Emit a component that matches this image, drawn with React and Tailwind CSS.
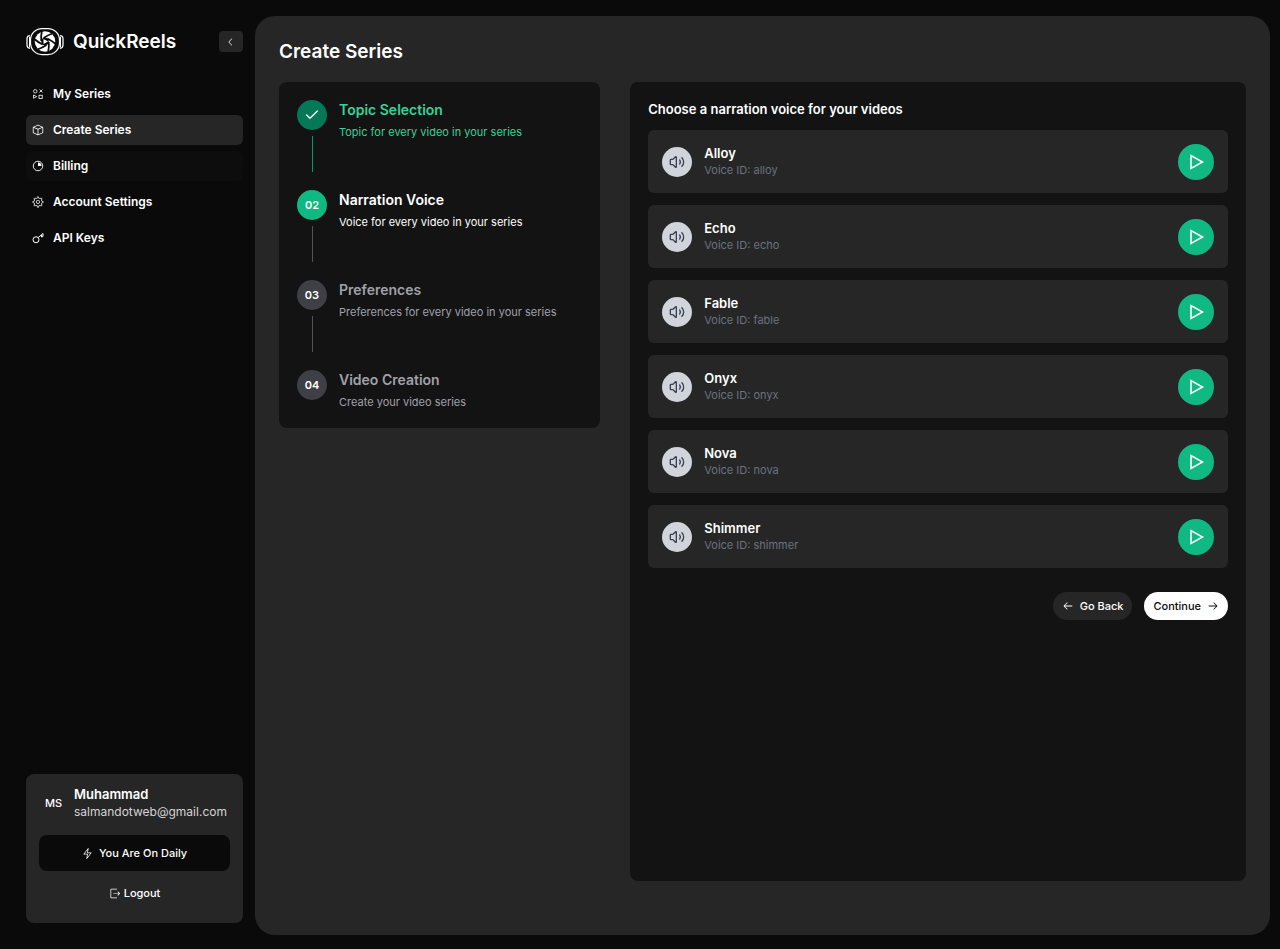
import { Check, Volume2 } from 'lucide-react';
import { RxCube, RxGear, RxLightningBolt, RxExit, RxChevronLeft, RxArrowLeft, RxArrowRight } from 'react-icons/rx';

function Logo() {
    return (<svg viewBox="0 0 76 58" className="h-[29px] w-[38px] shrink-0 text-white" fill="none" stroke="currentColor" aria-hidden="true">
      <rect x="9" y="3" width="58" height="52" rx="23" strokeWidth="2.5"/>
      <path d="M8 17C3 17 2 20 2 24v12c0 4 1 6 6 7M68 17c5 0 6 3 6 7v12c0 4-1 6-6 7" strokeWidth="2.5"/>
      <path d="M7 20v21M69 20v21" strokeWidth="2"/>
      <circle cx="38" cy="29" r="20.500" fill="currentColor" stroke="none"/>
      <g stroke="#0a0a0a" strokeWidth="3.5">
        {[0, 60, 120, 180, 240, 300].map((angle) => (<path key={angle} d="M35 22Q44 16 53 13" transform={`rotate(${angle} 38 29)`}/>))}
      </g>
      <circle cx="38" cy="29" r="7.500" fill="#0a0a0a" stroke="none"/>
      <path d="M35 24l9 5-9 5z" fill="currentColor" stroke="none"/>
    </svg>);
}

function ShapesIcon({ className }) {
    return (<svg viewBox="0 0 24 24" className={className} fill="none" stroke="currentColor" strokeWidth="1.6" aria-hidden="true">
      <circle cx="6.500" cy="6.500" r="3.500"/>
      <path d="M15 3l6 6M21 3l-6 6"/>
      <path d="M3 14v6.500l6.500-3.250z"/>
      <rect x="14" y="14.500" width="6.500" height="6.500"/>
    </svg>);
}

function QuarterIcon({ className }) {
    return (<svg viewBox="0 0 24 24" className={className} fill="none" stroke="currentColor" strokeWidth="1.8" aria-hidden="true">
      <circle cx="12" cy="12" r="9.500"/>
      <path d="M12 5a7 7 0 0 1 7 7h-7z" fill="currentColor" stroke="none"/>
    </svg>);
}

function KeyIcon({ className }) {
    return (<svg viewBox="0 0 24 24" className={className} fill="none" stroke="currentColor" strokeWidth="2" aria-hidden="true">
      <circle cx="8" cy="15.500" r="6"/>
      <path d="M12.500 11L22 3v6l-3 1V6"/>
    </svg>);
}

function PlayIcon({ className }) {
    return (<svg viewBox="0 0 18 18" className={className} fill="none" stroke="currentColor" strokeWidth="1.6" aria-hidden="true">
      <path d="M4 2.500v13L15.500 9z"/>
    </svg>);
}

const navItems = [
    { label: 'My Series', icon: ShapesIcon, style: '' },
    { label: 'Create Series', icon: RxCube, style: 'bg-[#262626]' },
    { label: 'Billing', icon: QuarterIcon, style: 'bg-[#0d0d0d]' },
    { label: 'Account Settings', icon: RxGear, style: '' },
    { label: 'API Keys', icon: KeyIcon, style: '' },
];

const steps = [
    { title: 'Topic Selection', text: 'Topic for every video in your series', color: 'text-[#34d399]', circle: 'bg-[#047857]', line: 'bg-[#059669]', done: true },
    { title: 'Narration Voice', text: 'Voice for every video in your series', color: 'text-white', circle: 'bg-[#10b981]', line: 'bg-[#52525b]' },
    { title: 'Preferences', text: 'Preferences for every video in your series', color: 'text-[#a1a1aa]', circle: 'bg-[#3f3f46]', line: 'bg-[#52525b]' },
    { title: 'Video Creation', text: 'Create your video series', color: 'text-[#a1a1aa]', circle: 'bg-[#3f3f46]' },
];

const voices = ['Alloy', 'Echo', 'Fable', 'Onyx', 'Nova', 'Shimmer'];

function Sidebar() {
    return (<aside className="flex w-[217px] shrink-0 flex-col pt-[10px] pb-3">
      <div className="flex h-[31px] items-center">
        <Logo />
        <span className="ml-[9px] text-[19px] leading-7 font-semibold">QuickReels</span>
        <button type="button" aria-label="Collapse sidebar" className="ml-auto flex h-[21px] w-6 items-center justify-center rounded bg-[#262626] text-[#d4d4d4]">
          <RxChevronLeft className="size-3"/>
        </button>
      </div>

      <nav className="mt-[22px] flex flex-col gap-1.5">
        {navItems.map(({ label, icon: Icon, style }) => (<a key={label} href="#" className={`flex h-[30px] items-center gap-[9px] rounded-md px-1.5 text-xs font-semibold ${style}`}>
            <Icon className="size-3"/>
            {label}
          </a>))}
      </nav>

      {/* User profile */}
      <div className="mt-auto rounded-lg bg-[#262626] px-[13px] pt-3 pb-[21px]">
        <div className="flex items-center">
          <span className="w-[35px] pl-1.5 text-[11px] font-medium">MS</span>
          <div>
            <p className="text-[13px] leading-[17px] font-semibold">Muhammad</p>
            <p className="text-xs leading-[17px] text-[#d4d4d4]">salmandotweb@gmail.com</p>
          </div>
        </div>
        <button type="button" className="mt-[15px] flex h-9 w-full items-center justify-center gap-1.5 rounded-lg bg-[#0a0a0a] text-[11px] font-medium">
          <RxLightningBolt className="size-[11px]"/>
          You Are On Daily
        </button>
        <button type="button" className="mx-auto mt-[13px] flex h-[18px] items-center gap-1 text-[11px] font-medium">
          <RxExit className="size-[11px]"/>
          Logout
        </button>
      </div>
    </aside>);
}

function Steps() {
    return (<ol className="self-start rounded-lg bg-[#131313] p-[18px]">
      {steps.map((step, i) => (<li key={step.title} className="flex gap-3">
          <div className="flex flex-col items-center">
            <span className={`flex size-[30px] items-center justify-center rounded-full text-[11px] font-semibold ${step.circle}`}>
              {step.done ? <Check className="size-4" strokeWidth={2}/> : `0${i + 1}`}
            </span>
            {step.line && <span className={`mt-1.5 mb-[18px] h-9 w-px ${step.line}`}/>}
          </div>
          <div className={`flex flex-col gap-1 ${step.color}`}>
            <h2 className="text-sm leading-5 font-semibold">{step.title}</h2>
            <p className="text-[11px] leading-4">{step.text}</p>
          </div>
        </li>))}
    </ol>);
}

function VoiceCard({ name }) {
    return (<li className="flex min-h-[63px] items-center gap-3 rounded-md bg-[#262626] px-3.5">
      <span className="flex size-[30px] shrink-0 items-center justify-center rounded-full bg-[#d1d5db] text-[#374151]">
        <Volume2 className="size-4" strokeWidth={2}/>
      </span>
      <div>
        <h3 className="text-[13px] leading-[17px] font-semibold">{name}</h3>
        <p className="text-[11px] leading-[17px] text-[#6b7280]">Voice ID: {name.toLowerCase()}</p>
      </div>
      <button type="button" aria-label={`Play ${name}`} className="ml-auto flex size-9 items-center justify-center rounded-full bg-[#10b981]">
        <PlayIcon className="size-[18px]"/>
      </button>
    </li>);
}

export default function App() {
    return (<div className="flex min-h-screen gap-3 bg-[#0a0a0a] pt-4 pr-2.5 pb-3.5 pl-[26px] font-['Inter',sans-serif] text-white">
      <Sidebar />

      <main className="flex flex-1 flex-col rounded-[20px] bg-[#262626] px-6 pt-[22px] pb-[54px]">
        <h1 className="text-[19px] leading-7 font-semibold">Create Series</h1>
        <div className="mt-4 grid flex-1 grid-cols-[12fr_23fr] gap-[30px]">
          <Steps />

          <section className="rounded-lg bg-[#131313] p-[18px]">
            <h2 className="text-[13px] leading-[18px] font-semibold">Choose a narration voice for your videos</h2>
            <ul className="mt-3 flex flex-col gap-3">
              {voices.map((name) => <VoiceCard key={name} name={name}/>)}
            </ul>
            <div className="mt-6 flex justify-end gap-3 text-[11px] font-medium">
              <button type="button" className="flex h-7 items-center gap-1.5 rounded-full bg-[#262626] px-[9px]">
                <RxArrowLeft className="size-3"/>
                Go Back
              </button>
              <button type="button" className="flex h-7 items-center gap-1.5 rounded-full bg-white px-[9px] text-[#0a0a0a]">
                Continue
                <RxArrowRight className="size-3"/>
              </button>
            </div>
          </section>
        </div>
      </main>
    </div>);
}
